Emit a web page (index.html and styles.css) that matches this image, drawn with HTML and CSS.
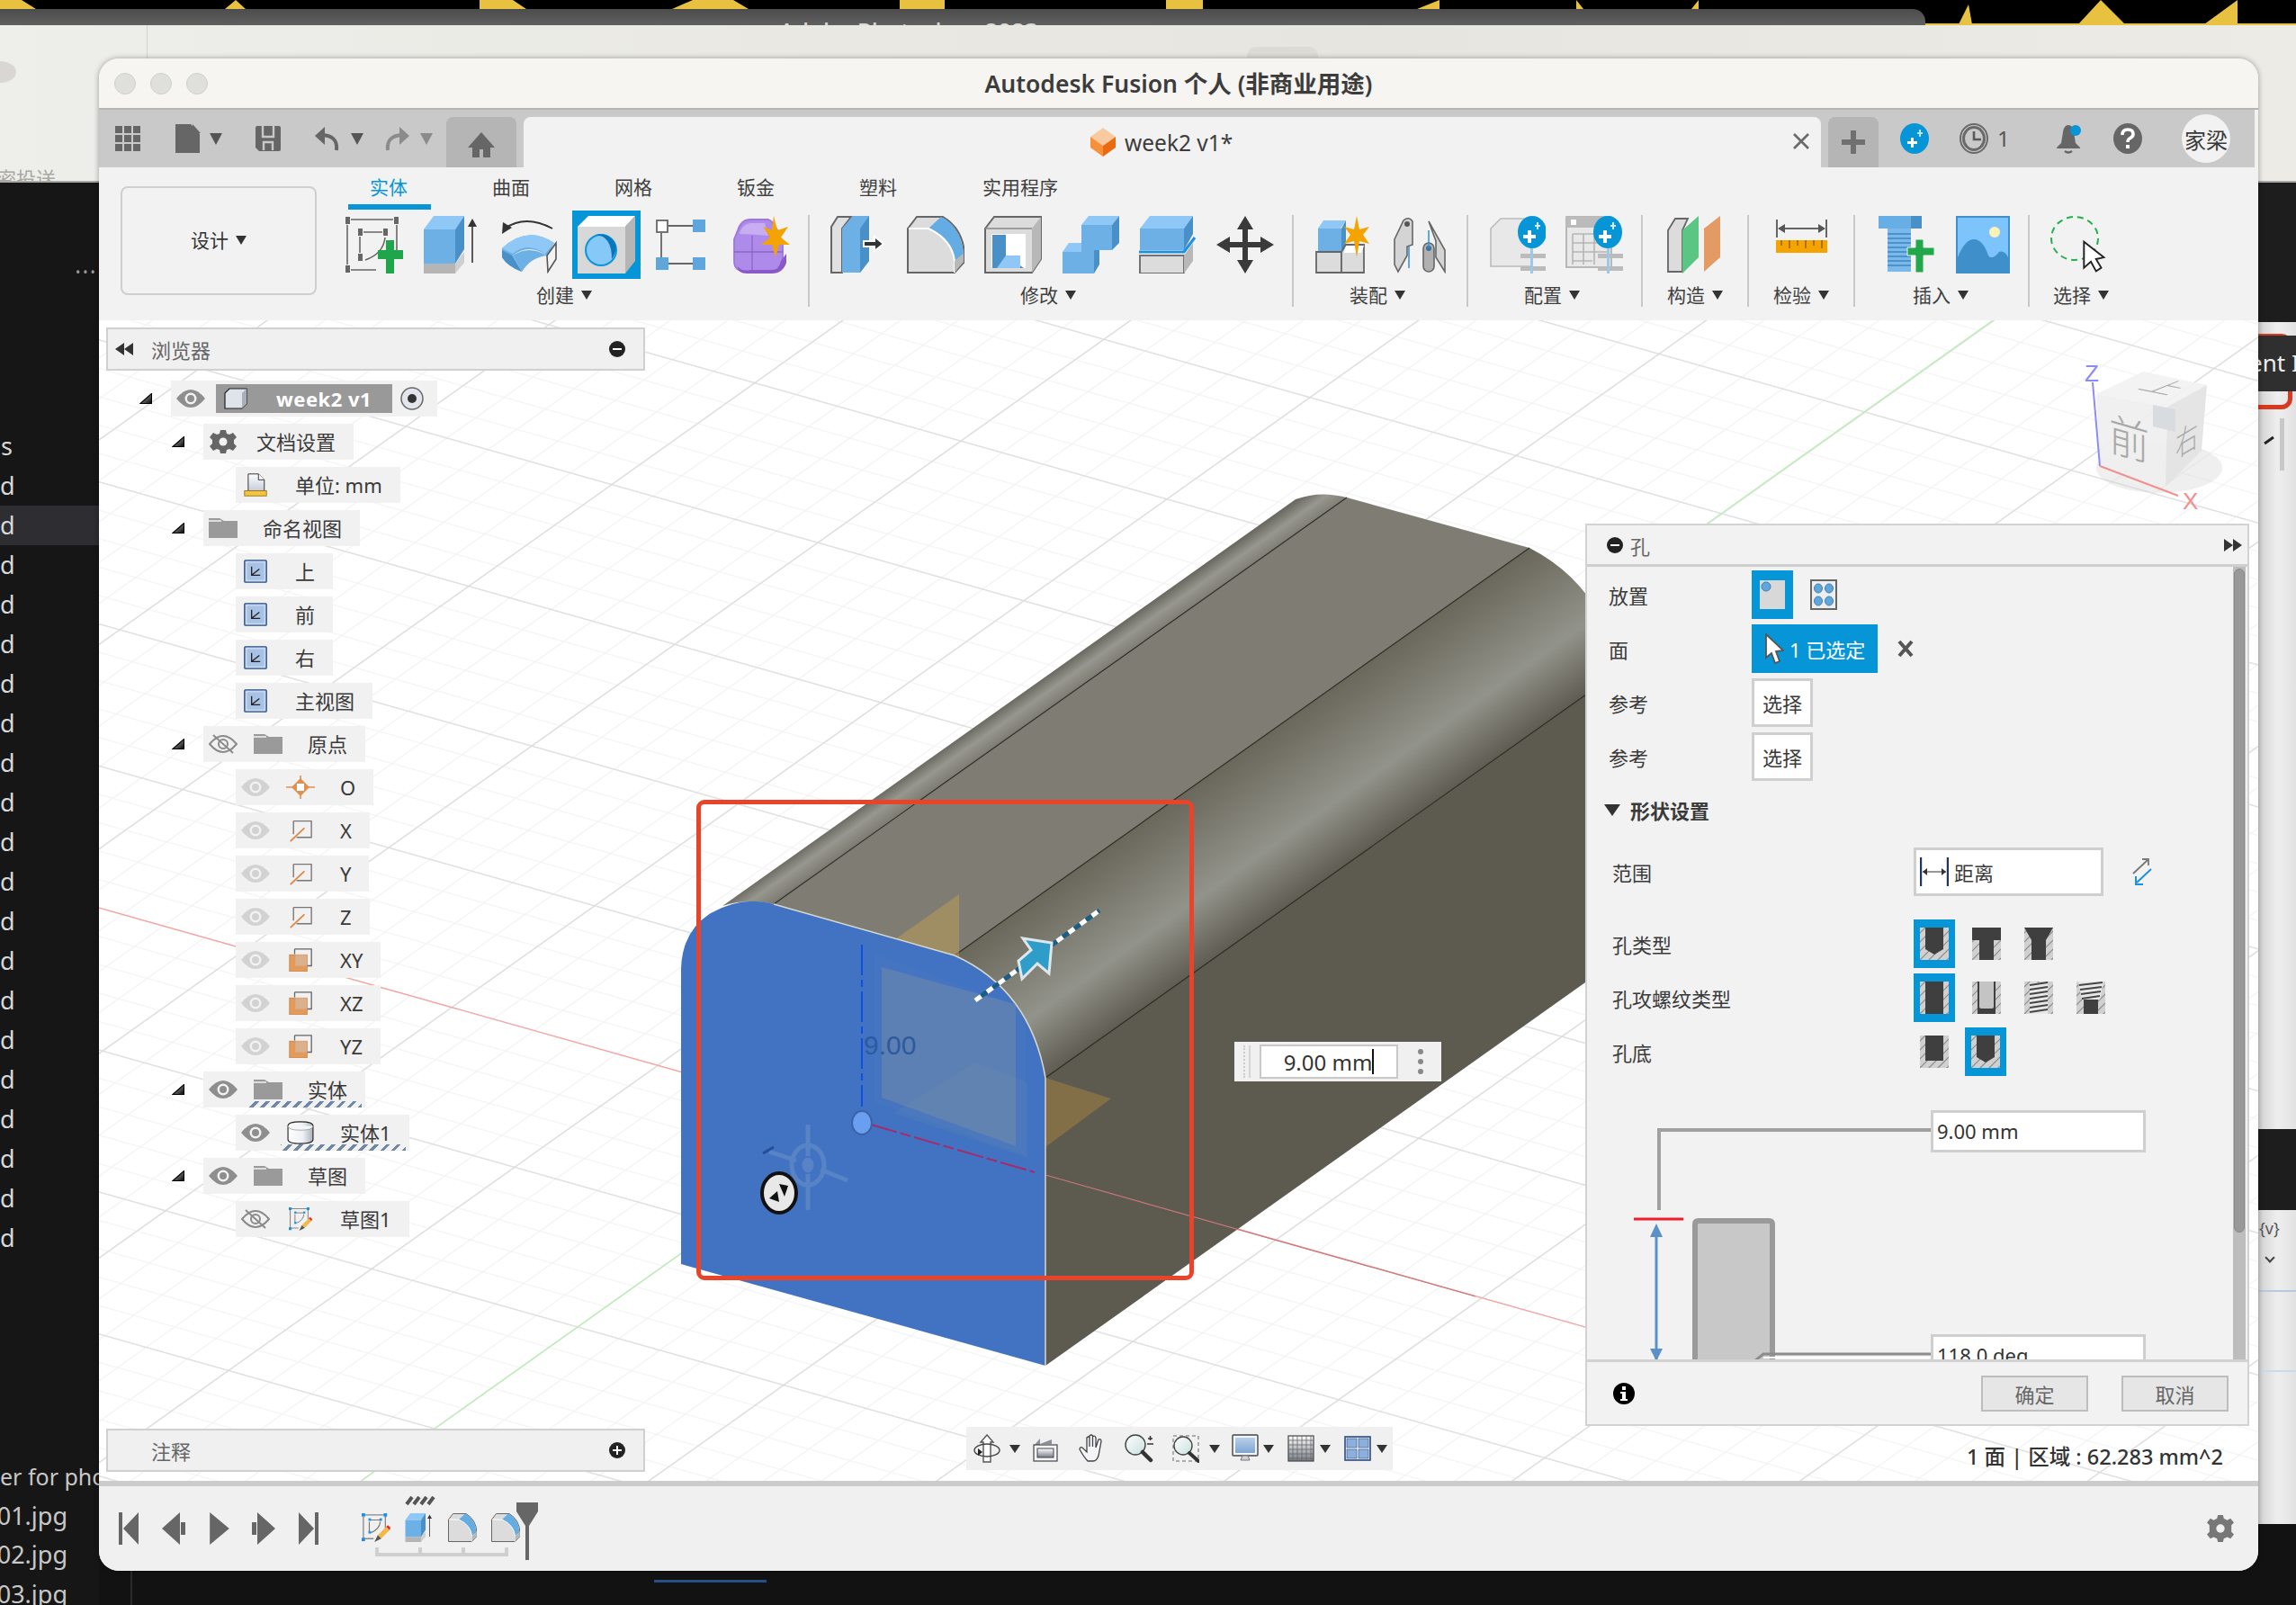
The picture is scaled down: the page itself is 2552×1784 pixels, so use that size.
FILE: index.html
```html
<!DOCTYPE html>
<html lang="zh">
<head>
<meta charset="utf-8">
<title>Autodesk Fusion</title>
<link rel="stylesheet" href="styles.css">
</head>
<body>
<svg class="defs" width="0" height="0">
  <defs>
    <linearGradient id="tw" x1="1" y1="1" x2="0" y2="0"><stop offset="0" stop-color="#000"/><stop offset="1" stop-color="#ccc"/></linearGradient>
    <linearGradient id="paper" x1="0" y1="0" x2="0" y2="1"><stop offset="0" stop-color="#fff"/><stop offset="1" stop-color="#c4cbd8"/></linearGradient>
    <linearGradient id="glass" x1="0" y1="0" x2="1" y2="1"><stop offset="0" stop-color="#fff"/><stop offset="1" stop-color="#c7e0dc"/></linearGradient>
    <linearGradient id="screen" x1="0" y1="0" x2="0" y2="1"><stop offset="0" stop-color="#b9d0ea"/><stop offset="1" stop-color="#7fa5d6"/></linearGradient>
    <linearGradient id="cloth" x1="0" y1="0" x2="0" y2="1"><stop offset="0" stop-color="#fff"/><stop offset="1" stop-color="#777c88"/></linearGradient>
    <linearGradient id="cyl" x1="0" y1="0" x2="1" y2="0"><stop offset="0" stop-color="#fff"/><stop offset=".6" stop-color="#eef0f4"/><stop offset="1" stop-color="#aab0bd"/></linearGradient>
    <linearGradient id="fl" gradientUnits="userSpaceOnUse" x1="1100" y1="796" x2="1119" y2="823"><stop offset="0" stop-color="#6b6a62"/><stop offset=".45" stop-color="#97978f"/><stop offset="1" stop-color="#7b796f"/></linearGradient>
    <linearGradient id="fr" gradientUnits="userSpaceOnUse" x1="1400" y1="822" x2="1498" y2="960"><stop offset="0" stop-color="#6a675b"/><stop offset=".62" stop-color="#92938a"/><stop offset="1" stop-color="#5f5c52"/></linearGradient>
    <pattern id="gmin" patternUnits="userSpaceOnUse" width="20" height="20" patternTransform="matrix(2.29 .646 1.59 -1.13 960 1249)"><path d="M0 0H20M0 20H20M0 0V20M20 0V20" stroke="#f3f3f3" stroke-width=".7" fill="none"/></pattern>
    <pattern id="gmaj" patternUnits="userSpaceOnUse" width="100" height="100" patternTransform="matrix(2.29 .646 1.59 -1.13 960 1249)"><path d="M0 0H100M0 100H100M0 0V100M100 0V100" stroke="#dcdcdc" stroke-width=".7" fill="none"/></pattern>
    <symbol id="eye" viewBox="0 0 32 22"><path d="M0 11Q16 -9 32 11Q16 31 0 11Z" fill="currentColor"/><circle cx="16" cy="11" r="6.5" fill="#f2f2f2"/><circle cx="16" cy="11" r="4" fill="currentColor"/></symbol>
    <symbol id="eyeoff" viewBox="0 0 32 22"><path d="M1 11Q16 -7 31 11Q16 29 1 11Z" fill="none" stroke="#8a8a8a" stroke-width="2"/><circle cx="16" cy="11" r="5" fill="none" stroke="#8a8a8a" stroke-width="2"/><path d="M5 1L27 21" stroke="#8a8a8a" stroke-width="2"/></symbol>
    <symbol id="folder" viewBox="0 0 32 22"><path d="M0 0H12L17 3H32V22H0Z" fill="#9a9a9a"/><path d="M0 3H14" stroke="#f2f2f2" stroke-width="1.5"/></symbol>
    <symbol id="tw-s" viewBox="0 0 14 12"><path d="M1 11.5L13.5 .5V11.5Z" fill="url(#tw)" stroke="#000" stroke-width="1.2"/></symbol>
    <symbol id="view" viewBox="0 0 30 30"><rect x="1" y="1" width="28" height="28" fill="#c7d9f0" stroke="#2b4a7f" stroke-width="1.6" rx="1"/><rect x="4" y="4" width="22" height="22" fill="#a7c2e4"/><path d="M10 9V20H21M10 20L20 12" stroke="#222" stroke-width="1.5" fill="none"/></symbol>
    <symbol id="axis" viewBox="0 0 30 30"><path d="M6 3H29V24H10" fill="none" stroke="#777" stroke-width="1.6"/><path d="M6 3V20" stroke="#777" stroke-width="1.6"/><path d="M2 29L20 12" stroke="#e5823d" stroke-width="2"/></symbol>
    <symbol id="plane" viewBox="0 0 32 32"><path d="M8 1H31V24H24M8 1V8" fill="none" stroke="#666" stroke-width="1.6"/><rect x="1" y="9" width="24" height="23" fill="#e39a5d" stroke="#c97e42"/><rect x="9" y="9" width="16" height="15" fill="#dbb08d"/></symbol>
    <symbol id="fillet" viewBox="0 0 64 64"><path d="M1 14L11 1H40Q62 14 64 42V51L53 63H1Z" fill="#dcdcdc" stroke="#666" stroke-width="2"/><path d="M24 14L38 1Q60 12 63 42L53 50Q50 26 24 14Z" fill="#64ace4"/><path d="M2 14H24Q50 26 53 50V63" fill="none" stroke="#fff" stroke-width="2"/><path d="M53 50L63 42V51L53 63Z" fill="#b8b8b8"/></symbol>
    <symbol id="extrude" viewBox="0 0 64 64"><path d="M1 15L12 0H46L36 15Z" fill="#8fc8f7"/><rect x="1" y="15" width="35" height="38" fill="#6cb0e6"/><path d="M36 15L46 0V37L36 53Z" fill="#4a90c8"/><rect x="1" y="53" width="35" height="11" fill="#b5b5b5"/><path d="M36 53L46 40V52L36 64Z" fill="#cfcfcf"/><path d="M55 52V8" stroke="#333" stroke-width="1.6"/><path d="M50 12L55 3L60 12Z" fill="#333"/></symbol>
    <symbol id="skedit" viewBox="0 0 34 34"><path d="M3 2H28V18M2 4V30H14" fill="none" stroke="#888" stroke-width="1.4"/><path d="M10 8H22M9 10V22M22 10Q21 19 11 23" fill="none" stroke="#777" stroke-width="1.2"/><g fill="#1e90e8"><rect x="0" y="0" width="4" height="4"/><rect x="26" y="0" width="4" height="4"/><rect x="0" y="29" width="4" height="4"/><rect x="8" y="6" width="3" height="3"/><rect x="21" y="6" width="3" height="3"/><rect x="8" y="21" width="3" height="3"/></g><path d="M17 32L19 26L29 16L33 20L23 30Z" fill="#f0b94a"/><path d="M29 16L31 14L34 17L33 20Z" fill="#e22"/><path d="M15 34L19 26L23 30Z" fill="#555"/></symbol>
    <symbol id="hatchU" viewBox="0 0 32 36"><rect width="32" height="36" fill="#d0d0d0"/><path d="M-4 10L8 -2M-4 20L18 -2M-4 30L28 -2M-2 38L36 0M8 38L36 10M18 38L36 20M28 38L36 30" stroke="#8a8a8a" stroke-width="1.2"/></symbol>
  </defs>
</svg>

<div class="desk">
  <div class="d-top">
    <svg class="d-stars" viewBox="0 0 2552 28" preserveAspectRatio="none"><path fill="#e9c140" d="M0 0H24L40 10H0ZM250 10L262 0L273 10ZM533 0H570L585 10H533ZM747 10L770 0H815L832 10ZM1000 0H1050V10H1000ZM1296 0H1337V10H1296ZM1575 10L1600 0V10ZM1752 0L1760 10H1752ZM1880 10L1888 0V10ZM2177 27L2188 5L2192 27ZM2310 27L2335 0L2362 27ZM2450 27L2487 0V27ZM2140 26H2552V28H2140Z"/></svg>
    <div class="d-photoshop"><span>Adobe Photoshop 2023</span></div>
  </div>
  <div class="d-win">
    <i class="d-vline"></i><i class="d-light"></i><i class="d-tabshape"></i>
    <span class="d-clip">密投送</span>
  </div>
  <div class="d-left">
    <i class="d-more">•••</i>
    <div class="d-list">
      <div class="d-it">s</div><div class="d-it">d</div><div class="d-it sel">d</div><div class="d-it">d</div><div class="d-it">d</div><div class="d-it">d</div><div class="d-it">d</div><div class="d-it">d</div><div class="d-it">d</div><div class="d-it">d</div><div class="d-it">d</div><div class="d-it">d</div><div class="d-it">d</div><div class="d-it">d</div><div class="d-it">d</div><div class="d-it">d</div><div class="d-it">d</div><div class="d-it">d</div><div class="d-it">d</div><div class="d-it">d</div><div class="d-it">d</div>
    </div>
    <div class="d-files">
      <div class="d-f first"><span>er for phone</span></div><div class="d-f"><span>_01.jpg</span></div><div class="d-f"><span>_02.jpg</span></div><div class="d-f"><span>_03.jpg</span></div>
    </div>
  </div>
  <i class="d-bline"></i><i class="d-blue"></i>
  <div class="d-right">
    <i class="dr-dark"></i>
    <i class="dr-red"></i>
    <div class="dr-tip"><span>ent I</span></div>
    <i class="dr-mark"></i><i class="dr-bar"></i>
    <i class="dr-dark2"></i>
    <span class="dr-v">{v}</span>
    <i class="dr-l1"></i><i class="dr-l2"></i>
    <i class="dr-chev"></i>
  </div>
</div>

<main class="win">
  <header class="titlebar">
    <div class="lights"><i></i><i></i><i></i></div>
    <h1>Autodesk Fusion 个人 (非商业用途)</h1>
  </header>

  <nav class="tabbar">
    <svg class="qa w28 first" viewBox="0 0 28 28"><path fill="#666" d="M0 0h8v8H0zM10 0h8v8h-8zM20 0h8v8h-8zM0 10h8v8H0zM10 10h8v8h-8zM20 10h8v8h-8zM0 20h8v8H0zM10 20h8v8h-8zM20 20h8v8h-8z"/></svg>
    <svg class="qa w28 m39" viewBox="0 0 28 32"><path fill="#666" d="M0 0H17L27 11V32H0ZM19 0L28 10H19Z"/></svg><i class="caret m10"></i>
    <svg class="qa w28 m37" viewBox="0 0 28 28"><path fill="#666" d="M2 0H26Q28 0 28 2V26Q28 28 26 28H4L0 24V2Q0 0 2 0Z"/><path d="M8 0V12H20V0M9 27V18H19V27" fill="none" stroke="#c9c9c9" stroke-width="2.4"/></svg>
    <svg class="qa w28 m38" viewBox="0 0 28 26"><path d="M24 26Q26 10 8 9" fill="none" stroke="#666" stroke-width="4"/><path d="M11 0L0 10L11 20Z" fill="#666"/></svg><i class="caret m12"></i>
    <svg class="qa w28 m23" viewBox="0 0 28 26"><path d="M4 26Q2 10 20 9" fill="none" stroke="#8b8b8b" stroke-width="4"/><path d="M17 0L28 10L17 20Z" fill="#8b8b8b"/></svg><i class="caret m12 dimc"></i>
    <div class="home"><svg width="32" height="28" viewBox="0 0 30 28"><path fill="#666" d="M15 0L30 17H25V28H17V19H13V28H5V17H0Z"/></svg></div>
    <div class="doc">
      <svg width="28" height="32" viewBox="0 0 28 32"><path d="M14 0L28 10L14 20L0 10Z" fill="#f9c9a0"/><path d="M0 10L14 20V32L0 22Z" fill="#f7903a"/><path d="M28 10L14 20V32L28 22Z" fill="#ea6a12"/></svg>
      <span>week2 v1*</span>
      <svg class="doc-x" width="18" height="18" viewBox="0 0 18 18"><path d="M1 1L17 17M17 1L1 17" stroke="#6a6a6a" stroke-width="2.6"/></svg>
    </div>
    <div class="plus"><svg width="26" height="26" viewBox="0 0 26 26"><path d="M10 0h6v10h10v6H16v10h-6V16H0v-6h10z" fill="#707070"/></svg></div>
    <div class="tr">
      <svg class="t-data" width="32" height="34" viewBox="0 0 32 34"><ellipse cx="16" cy="17" rx="16" ry="17" fill="#0696d7"/><path d="M12 16v4H8v3h4v4h3v-4h4v-3h-4v-4z" fill="#fff"/><path d="M19 10h2V7h2v3h2v2h-2v3h-2v-3h-2z" fill="#bfe6f8"/></svg>
      <svg class="t-clock" width="32" height="34" viewBox="0 0 32 34"><ellipse cx="16" cy="17" rx="15" ry="16" fill="none" stroke="#6a6a6a" stroke-width="2"/><ellipse cx="16" cy="17" rx="11.5" ry="12.5" fill="none" stroke="#6a6a6a" stroke-width="3"/><path d="M16 9V18H24" fill="none" stroke="#5a5a5a" stroke-width="2.6"/></svg>
      <span class="t-one">1</span>
      <svg class="t-bell" width="28" height="34" viewBox="0 0 28 34"><path d="M14 2Q19 2 20 10L22 22L27 27V28H1V27L6 22L8 10Q9 2 14 2Z" fill="#666"/><path d="M10 31Q14 34 18 31" stroke="#666" stroke-width="2.4" fill="none"/><circle cx="22" cy="8" r="6" fill="#0696d7"/></svg>
      <svg class="t-help" width="32" height="34" viewBox="0 0 32 34"><ellipse cx="16" cy="17" rx="16" ry="17" fill="#666"/><path d="M10 13Q10 7 16 7Q22 7 22 12Q22 15 18 17Q16 18 16 21" fill="none" stroke="#fff" stroke-width="3.6"/><rect x="14" y="24" width="4" height="4" fill="#fff"/></svg>
      <div class="avatar">家梁</div>
    </div>
  </nav>

  <section class="toolbar">
    <button class="design">设计<i class="caret sm"></i></button>
    <div class="ribbon">
      <div class="rtabs">
        <span class="rtab on">实体</span><span class="rtab">曲面</span><span class="rtab">网格</span><span class="rtab">钣金</span><span class="rtab">塑料</span><span class="rtab wide">实用程序</span>
      </div>
      <div class="groups">
        <div class="grp">
          <div class="cells">
            <span class="cell"><svg viewBox="0 0 64 64"><g fill="#666"><rect y="1" width="5" height="8"/><rect x="54" y="1" width="5" height="8"/><rect y="55" width="5" height="8"/><rect x="14" y="14" width="5" height="8"/><rect x="42" y="14" width="5" height="8"/><rect x="14" y="42" width="5" height="8"/></g><path d="M6 4H53M2 10V54M6 60H34M57 10V40M20 18H41M16 23V41M44 24Q42 42 22 49" fill="none" stroke="#666" stroke-width="1.6"/><path d="M36 38h9v-11h9v11h10v10h-10v16h-9v-16h-9z" fill="#1fa54a"/></svg></span>
            <span class="cell"><svg><use href="#extrude"/></svg></span>
            <span class="cell"><svg viewBox="0 0 64 64"><path d="M2 36Q30 10 60 30L52 44Q32 30 14 44L24 62Q8 56 2 46Z" fill="#6cb0e6"/><path d="M2 36Q30 10 60 30L50 42Q30 28 14 42Z" fill="#8fc8f7"/><path d="M2 38L13 44L24 62Q8 56 2 46Z" fill="#4a90c8"/><path d="M14 44Q32 32 52 44Q34 46 24 62Z" fill="#6cb0e6"/><path d="M52 44L62 30V48L53 62Z" fill="#f2f2f2" stroke="#555" stroke-width="1.6"/><path d="M5 14Q28 -2 58 14" fill="none" stroke="#333" stroke-width="1.8"/><path d="M2 20L3 7L13 13Z" fill="#333"/></svg></span>
            <span class="cell active"><svg viewBox="0 0 64 64"><path d="M0 12L12 0H64L53 12Z" fill="#fff"/><rect y="12" width="53" height="52" fill="#d8d8d8"/><path d="M53 12L64 0V50L53 64Z" fill="#b5b5b5"/><circle cx="26" cy="38" r="18" fill="#0a96d9"/><circle cx="26" cy="38" r="16" fill="#86c8f8"/><path d="M20 21Q38 22 38 48Q46 36 40 28Q32 18 20 21Z" fill="#0a76ba"/></svg></span>
            <span class="cell"><svg viewBox="0 0 64 64"><rect x="2" y="5" width="12" height="13" fill="#fff" stroke="#666" stroke-width="1.8"/><rect x="42" y="4" width="14" height="14" fill="#5fa6dd"/><rect x="1" y="46" width="14" height="14" fill="#5fa6dd"/><rect x="42" y="46" width="14" height="14" fill="#5fa6dd"/><path d="M15 11H42M7 19V46M15 53H42" stroke="#666" stroke-width="1.8"/></svg></span>
            <span class="cell"><svg viewBox="0 0 64 64"><path d="M6 16Q10 4 20 4H40Q48 6 56 32V50Q56 62 44 62H16Q2 62 2 50V26Z" fill="#ae8aeb" stroke="#9d78da" stroke-width="1.8"/><path d="M8 20Q10 10 20 8L36 8L40 22Q20 20 8 20Z" fill="#c8adf2"/><path d="M2 40H56M22 22V62" stroke="#8b66c9" stroke-width="1.3"/><path d="M6 56Q10 62 20 60H44Q52 60 54 50L60 42V52Q56 64 44 64H16Q6 64 6 56Z" fill="#8a58c8"/><path d="M46 0L50 16L62 12L54 24L64 32L52 32L48 46L44 32L32 32L42 24L34 12L44 16Z" fill="#f5a300"/></svg></span>
          </div>
          <div class="glabel">创建<i class="caret sm"></i></div>
        </div>
        <div class="grp">
          <div class="cells">
            <span class="cell"><svg viewBox="0 0 64 64"><path d="M2 12L9 1H24L14 14V63H2Z" fill="#e0e0e0" stroke="#666" stroke-width="2"/><path d="M14 14L26 0H44V50L34 63H14Z" fill="#6cb0e6"/><path d="M34 14L44 0V50L34 63Z" fill="#4a90c8"/><path d="M38 28H50V23L60 31L50 39V34H38Z" fill="#333" stroke="#fff" stroke-width="2"/></svg></span>
            <span class="cell"><svg><use href="#fillet"/></svg></span>
            <span class="cell"><svg viewBox="0 0 64 64"><path d="M1 14L11 1H63V48L53 63H1Z" fill="#dcdcdc" stroke="#666" stroke-width="2"/><path d="M53 14L63 1V48L53 63Z" fill="#b8b8b8"/><path d="M1 14H53" stroke="#888" stroke-width="1.3"/><rect x="8" y="20" width="38" height="38" fill="#fff"/><path d="M9 21H24V44L44 58H9Z" fill="#4a90c8"/><path d="M24 44H40V58H14Z" fill="#8fc8f7"/></svg></span>
            <span class="cell"><svg viewBox="0 0 64 64"><path d="M22 10L30 0H64L56 10ZM1 40L8 30H24V40Z" fill="#8fc8f7"/><path d="M22 10H56V38H36V64H1V40H22Z" fill="#6cb0e6"/><path d="M56 10L64 0V30L56 38ZM36 38L42 38V54L36 64Z" fill="#4a90c8"/></svg></span>
            <span class="cell"><svg viewBox="0 0 64 64"><path d="M1 14L12 0H60L50 14Z" fill="#8fc8f7"/><rect x="1" y="14" width="49" height="24" fill="#6cb0e6"/><path d="M50 14L60 0V20L50 38Z" fill="#4a90c8"/><path d="M0 40H50L62 24" fill="none" stroke="#1e90e0" stroke-width="3"/><rect x="1" y="44" width="49" height="20" fill="#dcdcdc" stroke="#666" stroke-width="1.8"/><path d="M50 44L60 30V50L50 64Z" fill="#b8b8b8"/></svg></span>
            <span class="cell"><svg viewBox="0 0 64 64"><path d="M32 0L41 15H35V29H49V23L64 32L49 41V35H35V49H41L32 64L23 49H29V35H15V41L0 32L15 23V29H29V15H23Z" fill="#3a3a3a"/></svg></span>
          </div>
          <div class="glabel">修改<i class="caret sm"></i></div>
        </div>
        <div class="grp">
          <div class="cells">
            <span class="cell"><svg viewBox="0 0 64 64"><path d="M5 14L11 5H36L30 14Z" fill="#8fc8f7"/><rect x="5" y="14" width="26" height="26" fill="#6cb0e6"/><path d="M31 14L36 5V32L31 40Z" fill="#4a90c8"/><path d="M3 40H31V63H3Z" fill="#dcdcdc" stroke="#666" stroke-width="1.8"/><path d="M31 40L36 32H56V63H31Z" fill="#dcdcdc" stroke="#666" stroke-width="1.8"/><path d="M36 33H56L53 41H34Z" fill="#fff"/><path d="M48 0L51 15L62 12L55 21L62 31L51 28L48 46L45 28L34 31L41 21L34 12L45 15Z" fill="#f5a300"/></svg></span>
            <span class="cell"><svg viewBox="0 0 64 64"><path d="M4 26L14 5Q20 0 24 6V32L18 34V44L8 62L4 54Z" fill="#d4d4d4" stroke="#666" stroke-width="1.6"/><path d="M42 6L60 38V62L50 46V28Z" fill="#d4d4d4" stroke="#666" stroke-width="1.6"/><rect x="36" y="30" width="12" height="32" rx="6" fill="#b0b0b0" stroke="#666" stroke-width="1.6"/><circle cx="42" cy="36" r="3" fill="#3a6ea5"/><circle cx="18" cy="9" r="3" fill="#555"/><path d="M42 16V36M20 34V58" stroke="#2f8fd8" stroke-width="1.5"/></svg></span>
          </div>
          <div class="glabel">装配<i class="caret sm"></i></div>
        </div>
        <div class="grp">
          <div class="cells">
            <span class="cell"><svg viewBox="0 0 64 64"><path d="M3 14L14 3H48V56H3Z" fill="#e8e8e8" stroke="#bbb" stroke-width="1.6"/><ellipse cx="49" cy="18" rx="16" ry="18" fill="#0696d7"/><path d="M44 16v5h-5v4h5v5h4v-5h5v-4h-5v-5z" fill="#fff"/><path d="M52 10h2V7h2v3h2v2h-2v3h-2v-3h-2z" fill="#d0eefc"/><rect x="36" y="42" width="28" height="5" fill="#bbb"/><rect x="36" y="56" width="28" height="5" fill="#bbb"/><rect x="47" y="36" width="3" height="28" fill="#9cc9ea"/></svg></span>
            <span class="cell"><svg viewBox="0 0 64 64"><rect x="1" y="1" width="50" height="56" fill="#e8e8e8" stroke="#aaa" stroke-width="1.6"/><rect x="1" y="1" width="50" height="12" fill="#bbb"/><rect x="6" y="4" width="6" height="6" fill="#fff"/><path d="M8 20H46M8 30H46M8 40H46M8 50H30M8 20V54M20 20V54M32 20V54" stroke="#b5b5b5" stroke-width="1.6"/><ellipse cx="47" cy="18" rx="16" ry="18" fill="#0696d7"/><path d="M42 16v5h-5v4h5v5h4v-5h5v-4h-5v-5z" fill="#fff"/><path d="M50 10h2V7h2v3h2v2h-2v3h-2v-3h-2z" fill="#d0eefc"/><rect x="36" y="42" width="28" height="5" fill="#bbb"/><rect x="36" y="56" width="28" height="5" fill="#bbb"/><rect x="46" y="36" width="3" height="28" fill="#9cc9ea"/></svg></span>
          </div>
          <div class="glabel">配置<i class="caret sm"></i></div>
        </div>
        <div class="grp p15">
          <div class="cells">
            <span class="cell"><svg viewBox="0 0 64 64"><path d="M2 16L10 3H24L18 16V62H2Z" fill="#dcdcdc" stroke="#666" stroke-width="1.8"/><path d="M18 16L36 0V46L18 64Z" fill="#5bc583"/><path d="M42 40V14L60 0V46L42 62Z" fill="#e49a63"/></svg></span>
          </div>
          <div class="glabel">构造<i class="caret sm"></i></div>
        </div>
        <div class="grp p15">
          <div class="cells">
            <span class="cell"><svg viewBox="0 0 64 64"><path d="M5 4V24M60 4V24M8 14H57" stroke="#666" stroke-width="2"/><path d="M6 14L14 9V19ZM59 14L51 9V19Z" fill="#555"/><rect x="4" y="27" width="57" height="14" fill="#f5a300"/><path d="M10 27V33M19 27V36M28 27V33M37 27V36M46 27V33M55 27V36" stroke="#8a5a00" stroke-width="1.3"/></svg></span>
          </div>
          <div class="glabel">检验<i class="caret sm"></i></div>
        </div>
        <div class="grp pins">
          <div class="cells">
            <span class="cell"><svg viewBox="0 0 64 64"><path d="M2 0H50V14H2Z" fill="#66aee4"/><rect x="38" y="0" width="12" height="14" fill="#4a90c8"/><rect x="12" y="14" width="26" height="48" fill="#7ab9ea"/><path d="M12 20H38M12 25H38M12 30H38M12 35H38M12 40H38M12 45H38M12 50H38M12 55H38" stroke="#3f87c1" stroke-width="1.5"/><path d="M34 35h9v-9h9v9h12v9h-12v19h-9v-19h-9z" fill="#22a84a" stroke="#f2f2f2" stroke-width="1"/></svg></span>
            <span class="cell"><svg viewBox="0 0 60 64"><rect width="60" height="64" fill="#3f8fcb"/><rect x="2" y="2" width="56" height="60" fill="#7cc4fb"/><circle cx="43" cy="18" r="6" fill="#fbf2b8"/><path d="M2 46Q10 26 20 26Q30 26 36 44Q40 50 48 40Q54 38 58 46V62H2Z" fill="#3f8fcb"/></svg></span>
          </div>
          <div class="glabel">插入<i class="caret sm"></i></div>
        </div>
        <div class="grp last">
          <div class="cells">
            <span class="cell"><svg viewBox="0 0 64 64"><ellipse cx="28" cy="25" rx="26" ry="24" fill="none" stroke="#22b14c" stroke-width="2" stroke-dasharray="7 5"/><path d="M42 30L42 60L50 53L56 64L62 60L56 50L65 48Z" transform="translate(-2 0) scale(.96)" fill="#fff" stroke="#222" stroke-width="2"/></svg></span>
          </div>
          <div class="glabel">选择<i class="caret sm"></i></div>
        </div>
      </div>
    </div>
  </section>

  <section class="viewport">
    <svg class="scene" viewBox="110 356 2400 1290" width="2400" height="1290">
      <rect x="110" y="356" width="2400" height="1290" fill="#fff"/>
      <rect x="110" y="356" width="2400" height="1290" fill="url(#gmin)"/>
      <rect x="110" y="356" width="2400" height="1290" fill="url(#gmaj)"/>
      <path d="M110 1009L1780 1480" stroke="#ff9c9c" stroke-width="1.2"/>
      <path d="M403 1645L2215 356" stroke="#b5f2ae" stroke-width="1.2"/>
      <!-- body -->
      <path d="M1162 1198V1518L1762 1092V773L1700 609Z" fill="#5d5a50"/>
      <path d="M860 1005L1497 553L1700 609L1061 1062Z" fill="#7f7d73"/>
      <path d="M803 1007Q830 998 860 1005L1497 553Q1467 545 1440 555Z" fill="url(#fl)"/>
      <path d="M1061 1062Q1145 1100 1162 1198L1801 745Q1780 650 1700 609Z" fill="url(#fr)"/>
      <path d="M860 1005L1497 553M1061 1062L1700 609M1162 1198L1801 745" stroke="#2f2d28" stroke-width="1.2" fill="none"/>
      <path d="M1162 1306L1640 1441" stroke="#c87878" stroke-width="1.2"/>
      <!-- planes above the face -->
      <path d="M995 1044L1066 994V1064Z" fill="#b99a55" opacity=".55"/>
      <path d="M1162 1198L1235 1221L1162 1275Z" fill="#b08a3f" opacity=".45"/>
      <!-- blue face -->
      <path d="M757 1405V1077Q758 1035 790 1015Q825 995 860 1005L1061 1062Q1145 1100 1162 1198V1518Z" fill="#4173c2"/>
      <path d="M860 1005L1061 1062Q1145 1100 1162 1198V1518" fill="none" stroke="#d8d8d0" stroke-width="1.5"/>
      <path d="M972 1060L1140 1122V1285L972 1225Z" fill="#8a94a4" opacity=".06"/>
      <path d="M980 1075L1129 1116V1274L980 1220Z" fill="#a8a288" opacity=".24"/>
      <path d="M993 1237L1084 1181L1142 1203V1287Z" fill="#a8a898" opacity=".08"/>
      <path d="M958 1050V1230" stroke="#1050e0" stroke-width="2" stroke-dasharray="34 5 8 5"/>
      <path d="M968 1250L1150 1303" stroke="#a82a68" stroke-width="2" stroke-dasharray="30 4 12 4"/>
      <path d="M1084 1112L1222 1012" stroke="#fff" stroke-width="5" stroke-dasharray="9 7"/>
      <path d="M1084 1112L1222 1012" stroke="#1a5d85" stroke-width="5" stroke-dasharray="8 8" stroke-dashoffset="8"/>
      <path d="M1137 1043L1169 1048L1166 1082L1153 1071L1136 1088L1132 1068L1146 1056Z" fill="#2f9dc9" stroke="#dfe7ec" stroke-width="3"/>
      <ellipse cx="958" cy="1248" rx="11" ry="13" fill="#6a9ff0" stroke="#3b62a8" stroke-width="2"/>
      <g stroke="#6b92c8" fill="none" opacity=".55">
        <ellipse cx="898" cy="1295" rx="18" ry="22" stroke-width="5"/><ellipse cx="898" cy="1295" rx="6" ry="8" fill="#6b92c8"/>
        <path d="M898 1250V1285M898 1305V1345M855 1280L885 1290M912 1300L942 1312" stroke-width="5"/>
      </g>
      <path d="M860 1275L848 1282" stroke="#224d9a" stroke-width="3"/>
      <ellipse cx="866" cy="1326" rx="19" ry="22" fill="#e8e8e8" stroke="#111" stroke-width="4"/>
      <path d="M855 1332L864 1324L866 1336ZM866 1316L876 1318L872 1330Z" fill="#111"/>
      <text class="dim-t" x="960" y="1172">9.00</text>
      <!-- view cube -->
      <ellipse cx="2400" cy="520" rx="70" ry="28" fill="#d0d0d0" opacity=".35"/>
      <path d="M2330 438L2382 413L2453 428L2409 452Z" fill="#f2f2f2" opacity=".9"/>
      <path d="M2330 438L2409 452L2407 541L2334 518Z" fill="#eeeeee" opacity=".9"/>
      <path d="M2409 452L2453 428L2447 501L2407 541Z" fill="#e2e2e2" opacity=".9"/>
      <path d="M2393 450L2418 455V480L2393 474Z" fill="#d8dce0"/>
      <text class="cube-t" transform="matrix(.9 .26 0 1 2344 500)">前</text>
      <text class="cube-t sm" transform="matrix(.7 -.42 0 1 2418 510)">右</text>
      <text class="cube-t sm" transform="matrix(1 .2 -1 .4 2375 432)">上</text>
      <path d="M2326 425L2334 518" stroke="#8c8cf2" stroke-width="2"/>
      <path d="M2334 518L2421 551" stroke="#f29090" stroke-width="2"/>
      <text class="ax z" x="2317" y="424">Z</text>
      <text class="ax x" x="2426" y="566">X</text>
    </svg>

    <div class="redbox"></div>

    <div class="dimbox"><i class="grip"></i><div class="dim-in">9.00 mm<i class="textcaret"></i></div><i class="dots"></i></div>

    <div class="panel browser"><svg class="pc" width="20" height="14" viewBox="0 0 20 14"><path d="M10 0L0 7L10 14ZM20 0L10 7L20 14Z" fill="#333"/></svg><span>浏览器</span><i class="round minus"></i></div>

    <div class="tree">
      <div class="node l0"><svg class="twisty"><use href="#tw-s"/></svg><div class="pill root"><svg class="ico eye"><use href="#eye"/></svg><div class="rootname"><svg width="26" height="24" viewBox="0 0 26 24"><path d="M1 6L6 1H25V18L20 23H1Z" fill="#dfe3ea" stroke="#222" stroke-width="1.2"/><path d="M20 6L25 1V18L20 23Z" fill="#a8afbb"/></svg><b>week2 v1</b></div><svg class="radio" width="26" height="26" viewBox="0 0 26 26"><circle cx="13" cy="13" r="12" fill="#e2e5ec" stroke="#666" stroke-width="1.5"/><circle cx="13" cy="13" r="5" fill="#333"/></svg></div></div>
      <div class="node l1"><svg class="twisty"><use href="#tw-s"/></svg><div class="pill"><svg class="ico" viewBox="0 0 32 26"><path fill="#666" d="M13 0h6l1 4 3 1 4-2 4 5-3 3v4l3 3-4 5-4-2-3 1-1 4h-6l-1-4-3-1-4 2-4-5 3-3v-4L1 8l4-5 4 2 3-1z"/><circle cx="16" cy="13" r="4.5" fill="#f2f2f2"/></svg><span class="lb gear">文档设置</span></div></div>
      <div class="node l2"><div class="pill"><svg class="ico" viewBox="0 0 32 32"><path d="M6 1H20L28 9V25H6Z" fill="url(#paper)" stroke="#333" stroke-width="1.2"/><path d="M20 1V9H28" fill="#fff" stroke="#333" stroke-width="1.2"/><rect x="1" y="24" width="30" height="7" fill="#f4c33f" stroke="#8a6a10"/></svg><span class="lb">单位: mm</span></div></div>
      <div class="node l1"><svg class="twisty"><use href="#tw-s"/></svg><div class="pill"><svg class="ico"><use href="#folder"/></svg><span class="lb">命名视图</span></div></div>
      <div class="node l2"><div class="pill"><svg class="ico"><use href="#view"/></svg><span class="lb">上</span></div></div>
      <div class="node l2"><div class="pill"><svg class="ico"><use href="#view"/></svg><span class="lb">前</span></div></div>
      <div class="node l2"><div class="pill"><svg class="ico"><use href="#view"/></svg><span class="lb">右</span></div></div>
      <div class="node l2"><div class="pill"><svg class="ico"><use href="#view"/></svg><span class="lb">主视图</span></div></div>
      <div class="node l1"><svg class="twisty"><use href="#tw-s"/></svg><div class="pill"><svg class="ico"><use href="#eyeoff"/></svg><svg class="ico g"><use href="#folder"/></svg><span class="lb">原点</span></div></div>
      <div class="node l2"><div class="pill"><svg class="ico eye off"><use href="#eye"/></svg><svg class="ico g" viewBox="0 0 32 26"><path d="M16 0V26M0 13H32" stroke="#e0914f" stroke-width="1.6"/><path d="M16 3L26 13L16 23L6 13Z" fill="#e0914f"/><rect x="12" y="9" width="8" height="8" fill="#fff"/></svg><span class="lb">O</span></div></div>
      <div class="node l2"><div class="pill"><svg class="ico eye off"><use href="#eye"/></svg><svg class="ico g"><use href="#axis"/></svg><span class="lb">X</span></div></div>
      <div class="node l2"><div class="pill"><svg class="ico eye off"><use href="#eye"/></svg><svg class="ico g"><use href="#axis"/></svg><span class="lb">Y</span></div></div>
      <div class="node l2"><div class="pill"><svg class="ico eye off"><use href="#eye"/></svg><svg class="ico g"><use href="#axis"/></svg><span class="lb">Z</span></div></div>
      <div class="node l2"><div class="pill"><svg class="ico eye off"><use href="#eye"/></svg><svg class="ico g"><use href="#plane"/></svg><span class="lb">XY</span></div></div>
      <div class="node l2"><div class="pill"><svg class="ico eye off"><use href="#eye"/></svg><svg class="ico g"><use href="#plane"/></svg><span class="lb">XZ</span></div></div>
      <div class="node l2"><div class="pill"><svg class="ico eye off"><use href="#eye"/></svg><svg class="ico g"><use href="#plane"/></svg><span class="lb">YZ</span></div></div>
      <div class="node l1"><svg class="twisty"><use href="#tw-s"/></svg><div class="pill warn"><svg class="ico eye"><use href="#eye"/></svg><svg class="ico g"><use href="#folder"/></svg><span class="lb">实体</span></div></div>
      <div class="node l2"><div class="pill warn"><svg class="ico eye"><use href="#eye"/></svg><svg class="ico g" viewBox="0 0 32 28"><path d="M1 6Q1 1 16 1Q31 1 31 6V22Q31 27 16 27Q1 27 1 22Z" fill="url(#cyl)" stroke="#222" stroke-width="1.2"/><path d="M1 6Q1 11 16 11Q31 11 31 6" fill="#f4f5f7" stroke="#777" stroke-width=".6"/></svg><span class="lb">实体1</span></div></div>
      <div class="node l1"><svg class="twisty"><use href="#tw-s"/></svg><div class="pill"><svg class="ico eye"><use href="#eye"/></svg><svg class="ico g"><use href="#folder"/></svg><span class="lb">草图</span></div></div>
      <div class="node l2"><div class="pill"><svg class="ico"><use href="#eyeoff"/></svg><svg class="ico g"><use href="#skedit"/></svg><span class="lb">草图1</span></div></div>
    </div>

    <div class="panel notes"><span>注释</span><i class="round plusr"></i></div>

    <div class="navbar">
      <svg class="nv" viewBox="0 0 30 32"><path d="M15 1L22 9H19V31H11V9H8Z" fill="#fff" stroke="#555" stroke-width="1.4"/><ellipse cx="15" cy="18" rx="14" ry="7" fill="none" stroke="#444" stroke-width="1.4"/><path d="M10 20L5 16V24Z" fill="#222"/></svg><i class="caret ml10"></i>
      <svg class="nv nw28 ml14" viewBox="0 0 28 30"><path d="M1 12L8 4V12ZM8 10L21 5V10Z" fill="#8a8f9a"/><rect x="1" y="11" width="26" height="18" fill="#f4f5f8" stroke="#444" stroke-width="1.2"/><rect x="5" y="15" width="18" height="10" fill="url(#cloth)" stroke="#444"/></svg>
      <svg class="nv ml23" viewBox="0 0 30 32"><path d="M10 30Q6 26 1 17Q1 14 4 15L9 20V4Q11 2 12 4V14V2Q14 0 15.5 2V14V3Q18 1 19 4V15L22 6Q25 5 25 8L22 24Q20 30 16 30Z" fill="#f4f5f8" stroke="#444" stroke-width="1.3"/></svg>
      <svg class="nv nw32 ml21" viewBox="0 0 32 32"><circle cx="12" cy="12" r="11" fill="url(#glass)" stroke="#444" stroke-width="1.4"/><path d="M20 20L29 29" stroke="#333" stroke-width="4.5" stroke-linecap="round"/><path d="M26 5H31M28.5 2V7M25 11H32" stroke="#333" stroke-width="1.5"/></svg>
      <svg class="nv ml21" viewBox="0 0 30 32"><rect x="1" y="2" width="28" height="28" fill="none" stroke="#666" stroke-dasharray="4 3"/><circle cx="12" cy="13" r="10" fill="url(#glass)" stroke="#444" stroke-width="1.4"/><path d="M19 21L29 30" stroke="#333" stroke-width="4" stroke-linecap="round"/></svg><i class="caret ml11"></i>
      <svg class="nv ml13" viewBox="0 0 30 32"><rect x="1" y="1" width="28" height="23" rx="1" fill="#f4f5f8" stroke="#444" stroke-width="1.4"/><rect x="4" y="4" width="22" height="17" fill="url(#screen)"/><path d="M12 24H18L20 29H10Z" fill="#d0d3d8" stroke="#777"/></svg><i class="caret ml5"></i>
      <svg class="nv ml15" viewBox="0 0 30 30"><rect x="1" y="1" width="28" height="28" fill="url(#cloth)" stroke="#444" stroke-width="1.2"/><path d="M6 1V29M11 1V29M16 1V29M21 1V29M26 1V29M1 6H29M1 11H29M1 16H29M1 21H29M1 26H29" stroke="#666" stroke-width=".8"/></svg><i class="caret ml6"></i>
      <svg class="nv ml15" viewBox="0 0 30 30"><rect x="1" y="2" width="28" height="26" fill="#f0f2f6" stroke="#2b4a7f" stroke-width="1.6"/><rect x="3" y="4" width="11" height="10" fill="#8cb0dd" stroke="#2b4a7f" stroke-width=".6"/><rect x="16" y="4" width="11" height="10" fill="#8cb0dd" stroke="#2b4a7f" stroke-width=".6"/><rect x="3" y="16" width="11" height="10" fill="#8cb0dd" stroke="#2b4a7f" stroke-width=".6"/><rect x="16" y="16" width="11" height="10" fill="#8cb0dd" stroke="#2b4a7f" stroke-width=".6"/></svg><i class="caret ml6"></i>
    </div>

    <div class="status">1 面 | 区域 : 62.283 mm^2</div>

    <aside class="hole">
      <div class="hole-head"><i class="round minus dark"></i><span>孔</span><svg class="hole-ff" width="20" height="14" viewBox="0 0 20 14"><path d="M0 0L10 7L0 14ZM10 0L20 7L10 14Z" fill="#333"/></svg></div>
      <div class="hole-body">
        <div class="scroll"><i></i></div>
        <div class="row"><label>放置</label><span class="tog sel"><svg width="28" height="32" viewBox="0 0 28 32"><rect width="28" height="32" fill="#d8d8d8"/><circle cx="7" cy="7" r="5" fill="#5fa6dd" stroke="#3f7fb5"/></svg></span><svg class="tog2" width="30" height="34" viewBox="0 0 30 34"><rect x="1" y="1" width="28" height="32" fill="#eee" stroke="#666" stroke-width="2"/><g fill="#5fa6dd" stroke="#3f7fb5"><ellipse cx="9" cy="10" rx="4.5" ry="5"/><ellipse cx="21" cy="10" rx="4.5" ry="5"/><ellipse cx="9" cy="24" rx="4.5" ry="5"/><ellipse cx="21" cy="24" rx="4.5" ry="5"/></g></svg></div>
        <div class="row"><label>面</label><span class="selbtn"><svg width="22" height="34" viewBox="0 0 22 34"><path d="M2 1V27L8 22L12 33L17 31L13 20L21 19Z" fill="#fff" stroke="#555" stroke-width="1.8"/></svg>1 已选定</span><svg class="clr" width="18" height="20" viewBox="0 0 18 20"><path d="M2 2L16 18M16 2L2 18" stroke="#555" stroke-width="4"/></svg></div>
        <div class="row"><label>参考</label><span class="pick">选择</span></div>
        <div class="row"><label>参考</label><span class="pick">选择</span></div>
        <div class="sect"><i class="tri"></i><b>形状设置</b></div>
        <div class="row wide gap26"><label>范围</label><span class="combo"><svg width="32" height="32" viewBox="0 0 32 32"><path d="M1 0V32M31 0V32" stroke="#1c3563" stroke-width="2.4"/><path d="M3 16H29" stroke="#333" stroke-width="1"/><path d="M3 16L8 12V20ZM29 16L24 12V20Z" fill="#333"/></svg>距离</span><svg class="flip" width="22" height="32" viewBox="0 0 22 32"><path d="M1 18L17 3M11 2H18V9" fill="none" stroke="#777" stroke-width="1.8"/><path d="M21 13L5 28M4 21V30H12" fill="none" stroke="#1e90e0" stroke-width="2"/></svg></div>
        <div class="row wide"><label>孔类型</label>
          <span class="hbtn sel"><svg viewBox="0 0 32 36"><use href="#hatchU"/><path d="M6 0H26V24L16 30L6 24Z" fill="#3f3f3f"/></svg></span>
          <span class="hbtn"><svg viewBox="0 0 32 36"><use href="#hatchU"/><path d="M0 0H32V14H24V36H8V14H0Z" fill="#3f3f3f"/></svg></span>
          <span class="hbtn"><svg viewBox="0 0 32 36"><use href="#hatchU"/><path d="M0 0H32L24 14V36H8V14Z" fill="#3f3f3f"/></svg></span>
        </div>
        <div class="row wide"><label>孔攻螺纹类型</label>
          <span class="hbtn sel"><svg viewBox="0 0 32 36"><use href="#hatchU"/><rect x="6" width="20" height="36" fill="#3f3f3f"/></svg></span>
          <span class="hbtn"><svg viewBox="0 0 32 36"><use href="#hatchU"/><rect x="6" width="20" height="36" fill="#3f3f3f"/><rect x="8" y="-2" width="16" height="32" rx="2" fill="#c4c4c4"/></svg></span>
          <span class="hbtn"><svg viewBox="0 0 32 36"><use href="#hatchU"/><path d="M6 1H26V36H6Z" fill="#e8e8e8"/><path d="M6 4L26 1M6 9L26 6M6 14L26 11M6 19L26 16M6 24L26 21M6 29L26 26M6 34L26 31" stroke="#444" stroke-width="2"/></svg></span>
          <span class="hbtn"><svg viewBox="0 0 32 36"><use href="#hatchU"/><path d="M2 0H30L26 20H6Z" fill="#e8e8e8"/><path d="M3 4L29 1M4 9L28 6M5 14L27 11M6 19L26 16" stroke="#444" stroke-width="2"/><rect x="8" y="20" width="16" height="16" fill="#3f3f3f"/></svg></span>
        </div>
        <div class="row wide"><label>孔底</label>
          <span class="hbtn"><svg viewBox="0 0 32 36"><use href="#hatchU"/><rect x="6" width="20" height="28" fill="#3f3f3f"/></svg></span>
          <span class="hbtn sel m-l"><svg viewBox="0 0 32 36"><use href="#hatchU"/><path d="M6 0H26V24L16 30L6 24Z" fill="#3f3f3f"/></svg></span>
        </div>
        <div class="diagram">
          <svg class="dia-svg" viewBox="0 0 720 316" width="720" height="316">
            <path d="M382 59H80V148" fill="none" stroke="#a0a0a0" stroke-width="4"/>
            <path d="M52 158H107" stroke="#f01c2c" stroke-width="3"/>
            <path d="M77 176V316" stroke="#5b90c8" stroke-width="3"/>
            <path d="M77 163L70 178H84Z" fill="#5b90c8"/><path d="M77 316L70 302H84Z" fill="#5b90c8"/>
            <path d="M120 316V164Q120 160 124 160H202Q206 160 206 164V316" fill="#c8c8c8" stroke="#9a9a9a" stroke-width="6"/>
            <path d="M186 316L196 308H382" fill="none" stroke="#8c8c8c" stroke-width="3"/>
            <path d="M196 312H382" stroke="#fff" stroke-width="2"/>
          </svg>
          <span class="val v1">9.00 mm</span>
          <span class="val v2">118.0 deg</span>
        </div>
      </div>
      <div class="hole-foot">
        <svg width="24" height="24" viewBox="0 0 24 24"><circle cx="12" cy="12" r="12" fill="#000"/><rect x="10" y="4" width="4" height="4" fill="#fff"/><path d="M8 10H14V18H16V20H8V18H10V12H8Z" fill="#fff"/></svg>
        <button class="fb first">确定</button><button class="fb">取消</button>
      </div>
    </aside>
  </section>

  <footer class="timeline">
    <svg class="tc w22" viewBox="0 0 22 36"><path d="M0 0H4V36H0ZM22 0V36L5 18Z" fill="#666"/></svg>
    <svg class="tc w26 g26" viewBox="0 0 26 36"><path d="M20 0V36L0 18ZM21 11H26V25H21Z" fill="#666"/></svg>
    <svg class="tc w24 g26" viewBox="0 0 24 40"><path d="M0 0L24 20L0 40Z" fill="#666"/></svg>
    <svg class="tc w26 g24" viewBox="0 0 26 36"><path d="M0 11H5V25H0ZM6 0L26 18L6 36Z" fill="#666"/></svg>
    <svg class="tc w22 g26" viewBox="0 0 22 36"><path d="M0 0L17 18L0 36ZM18 0H22V36H18Z" fill="#666"/></svg>
    <svg class="tl-track" viewBox="0 0 200 94" width="200" height="94">
      <use href="#skedit" x="0" y="30" width="32" height="32"/>
      <use href="#extrude" x="48" y="30" width="32" height="32"/>
      <use href="#fillet" x="96" y="30" width="32" height="32"/>
      <use href="#fillet" x="144" y="30" width="32" height="32"/>
      <path d="M50 20L56 12M58 20L64 12M66 20L72 12M74 20L80 12" stroke="#555" stroke-width="4"/>
      <path d="M17 68V76H161V68M65 68V76M113 68V76" fill="none" stroke="#cfcfcf" stroke-width="4"/>
      <path d="M172 18H196V28L186 44L182 44L172 28Z" fill="#666"/><rect x="182" y="36" width="4" height="46" fill="#666"/>
    </svg>
    <svg class="tl-gear" width="30" height="30" viewBox="0 0 32 32"><path fill="#777" d="M13 0h6l1 4 4 2 4-2 4 5-3 3v8l3 3-4 5-4-2-4 2-1 4h-6l-1-4-4-2-4 2-4-5 3-3v-8L0 9l4-5 4 2 4-2z"/><circle cx="16" cy="16" r="5" fill="#f0f0f0"/></svg>
  </footer>
</main>
</body>
</html>
```

FILE: styles.css
```css
* { box-sizing: border-box; }
html, body { margin: 0; padding: 0; }
body {
  width: 2552px; height: 1784px; position: relative; overflow: hidden;
  background: #121212;
  font-family: "Noto Sans", "Noto Sans CJK SC", sans-serif;
  color: #3a3a3a;
}
i { display: block; font-style: normal; }
svg { display: block; flex: none; }
.defs { position: absolute; }

/* desktop behind */
.desk { position: absolute; inset: 0; overflow: hidden; }
.d-top { position: absolute; left: 0; top: 0; width: 2552px; height: 28px; background: #000; }
.d-stars { position: absolute; inset: 0; width: 100%; height: 100%; }
.d-photoshop {
  position: absolute; left: 0; top: 10px; width: 2140px; height: 18px; overflow: hidden;
  background: linear-gradient(#4c4c4c, #606060); border-radius: 0 14px 0 0; text-align: center;
}
.d-photoshop span { display: block; margin: 9px 0 0 -120px; font-size: 26px; line-height: 30px; color: #d8d8d8; font-weight: 500; }
.d-win { position: absolute; left: 0; top: 28px; width: 2552px; height: 175px; background: linear-gradient(90deg, #eeeeea, #e6e5df 60%, #ecebe6); border-bottom: 2px solid #a9a9a5; }
.d-vline { position: absolute; left: 163px; top: 0; width: 1px; height: 38px; background: #d4d3cf; }
.d-light { position: absolute; left: -18px; top: 40px; width: 36px; height: 24px; border-radius: 50%; background: #d8d7d3; }
.d-tabshape { position: absolute; left: 1386px; top: 24px; width: 79px; height: 12px; background: #dcdbd6; border-radius: 10px 10px 0 0; }
.d-clip { position: absolute; left: -4px; top: 155px; font-size: 22px; line-height: 30px; color: #a9a8a4; }
.d-left { position: absolute; left: 0; top: 203px; width: 110px; bottom: 0; background: #161616; }
.d-more { position: absolute; left: 84px; top: 92px; font-size: 14px; line-height: 16px; letter-spacing: 3px; color: #9c9c9c; white-space: nowrap; }
.d-list { position: absolute; left: 0; top: 271px; width: 110px; }
.d-it { height: 44px; line-height: 44px; font-size: 27px; color: #d8d8d8; text-align: right; padding-right: 96px; overflow: hidden; }
.d-it.sel { background: #2e2e32; }
.d-files { position: absolute; left: 0; top: 1416px; width: 110px; }
.d-f { height: 43.5px; display: flex; justify-content: flex-end; overflow: hidden; line-height: 44px; font-size: 27px; color: #c8c8c8; white-space: nowrap; width: 75px; }
.d-f.first { width: 110px; justify-content: flex-start; font-size: 25px; }
.d-f span { flex: none; }
.d-bline { position: absolute; left: 145px; top: 1746px; bottom: 0; width: 2px; background: #2a2a2a; }
.d-blue { position: absolute; left: 727px; top: 1756px; width: 125px; height: 3px; background: #264f86; }
.d-right { position: absolute; left: 2510px; top: 203px; width: 42px; height: 1491px; background: linear-gradient(90deg, #d2d2d2, #eeeeee 50%, #e2e2e2); overflow: hidden; }
.dr-dark { position: absolute; left: 0; top: 0; width: 42px; height: 155px; background: #1d1d1d; }
.dr-red { position: absolute; left: -14px; top: 168px; width: 52px; height: 84px; border: 5px solid #d8391f; border-radius: 12px; }
.dr-tip { position: absolute; left: 0; top: 170px; width: 42px; height: 62px; background: #2f2f2f; overflow: hidden; }
.dr-tip span { display: block; margin-left: -10px; font-size: 26px; line-height: 60px; color: #eee; white-space: nowrap; }
.dr-mark { position: absolute; left: 6px; top: 285px; width: 12px; height: 3px; background: #222; transform: rotate(-35deg); }
.dr-bar { position: absolute; left: 24px; top: 262px; width: 5px; height: 58px; background: #c8c8c8; }
.dr-dark2 { position: absolute; left: 0; top: 1052px; width: 42px; height: 90px; background: #1d1d1d; }
.dr-v { position: absolute; left: 1px; top: 1150px; font-size: 18px; line-height: 24px; color: #555; }
.dr-l1 { position: absolute; left: 0; top: 1231px; width: 42px; height: 2px; background: #b9c8de; }
.dr-l2 { position: absolute; left: 0; top: 1320px; width: 42px; height: 2px; background: #c8dbe8; }
.dr-chev { position: absolute; left: 9px; top: 1191px; width: 8px; height: 8px; border-right: 2px solid #444; border-bottom: 2px solid #444; transform: rotate(45deg); }

/* window */
.win {
  position: absolute; left: 110px; top: 65px; width: 2400px; height: 1681px;
  display: flex; flex-direction: column; overflow: hidden;
  border-radius: 22px; background: #f2f2f2;
  box-shadow: 0 0 6px rgba(0,0,0,.35);
}
.titlebar { height: 57px; flex: none; position: relative; display: flex; align-items: center; justify-content: center; background: #f6f5f1; border-bottom: 2px solid #b5b5b3; }
.titlebar h1 { margin: 0; font-size: 26.5px; font-weight: 600; color: #3c3c3c; line-height: 36px; }
.lights { position: absolute; left: 17px; top: 16px; display: flex; gap: 16px; }
.lights i { width: 24px; height: 24px; border-radius: 50%; background: #dfdfdb; border: 1px solid #cfcfcb; }

.tabbar { height: 64px; flex: none; background: #c9c9c9; display: flex; align-items: center; padding-right: 4px; background-clip: content-box; }
.qa { height: 32px; width: 28px; }
.qa.first { margin-left: 18px; }
.m39 { margin-left: 39px; }
.m37 { margin-left: 37px; }
.m38 { margin-left: 38px; }
.m23 { margin-left: 23px; }
.m10 { margin-left: 10px; }
.m12 { margin-left: 12px; }
.caret { width: 0; height: 0; flex: none; border-left: 7.5px solid transparent; border-right: 7.5px solid transparent; border-top: 13px solid #555; }
.caret.dimc { border-top-color: #8b8b8b; }
.caret.sm { display: inline-block; margin-left: 8px; border-left-width: 6.5px; border-right-width: 6.5px; border-top: 10px solid #333; vertical-align: 3px; }
.home { margin-left: 15px; width: 78px; align-self: flex-end; height: 56px; background: #b5b5b5; border-radius: 8px 8px 0 0; display: flex; align-items: center; justify-content: center; padding-top: 6px; }
.doc { margin-left: 8px; width: 1442px; align-self: flex-end; height: 56px; background: #f2f2f2; border-radius: 8px 8px 0 0; display: flex; align-items: center; padding-left: 630px; position: relative; }
.doc span { margin-left: 10px; font-size: 24.5px; color: #3c3c3c; line-height: 32px; padding-top: 2px; }
.doc-x { position: absolute; left: 1411px; top: 18px; }
.plus { margin-left: 8px; width: 56px; align-self: flex-end; height: 56px; background: #b5b5b5; border-radius: 8px 8px 0 0; display: flex; align-items: center; justify-content: center; }
.tr { display: flex; align-items: center; height: 64px; }
.t-data { margin-left: 24px; }
.t-clock { margin-left: 34px; }
.t-one { margin-left: 10px; font-size: 24px; color: #555; line-height: 30px; width: 18px; }
.t-bell { margin-left: 47px; }
.t-help { margin-left: 36px; }
.avatar { margin-left: 44px; width: 54px; height: 54px; border-radius: 50%; background: #f2f2f2; display: flex; align-items: center; justify-content: center; font-size: 24px; color: #3a3a3a; white-space: nowrap; }

.toolbar { height: 170px; flex: none; background: #f2f2f2; display: flex; padding-left: 24px; position: relative; }
.design { margin-top: 21px; width: 218px; height: 121px; border: 2px solid #cfcfcf; border-radius: 8px; background: #f2f2f2; font: inherit; font-size: 21px; color: #333; padding-bottom: 4px; }
.ribbon { margin-left: 12px; display: flex; flex-direction: column; }
.rtabs { display: flex; height: 48px; }
.rtab { width: 136px; height: 47px; text-align: center; font-size: 21px; line-height: 44px; color: #3f3f3f; }
.rtab.wide { width: 180px; }
.rtab.on { color: #0696d7; position: relative; }
.rtab.on::after { content: ""; position: absolute; left: 23px; right: 21px; bottom: 0; height: 6px; background: #0696d7; }
.groups { display: flex; margin-left: 9px; }
.grp { height: 107px; display: flex; flex-direction: column; padding: 0 11px; position: relative; }
.grp:first-child { padding-left: 0; }
.grp::after { content: ""; position: absolute; right: 0; top: 5px; width: 2px; height: 102px; background: #c8c8c8; }
.grp.p15 { padding: 0 17px 0 15px; }
.grp.pins { padding: 0 9px 0 13px; }
.grp.last::after { display: none; }
.cells { display: flex; height: 76px; }
.cell { width: 86px; height: 76px; display: flex; align-items: center; justify-content: center; }
.cell svg { width: 64px; height: 64px; }
.cell.active { position: relative; }
.cell.active::before { content: ""; position: absolute; left: 5px; top: 0; width: 76px; height: 76px; background: #0696d7; }
.cell.active svg { position: relative; }
.glabel { margin-top: 3px; height: 30px; line-height: 30px; text-align: center; font-size: 21px; color: #3f3f3f; white-space: nowrap; padding-right: 8px; }
.p15 .glabel { padding-right: 0; }
.pins .glabel { padding-right: 8px; }
.last .glabel { padding-right: 0; margin-left: 6px; }

.viewport { flex: 1; position: relative; background: #fff; overflow: hidden; min-height: 0; }
.scene { position: absolute; left: 0; top: 0; }
.dim-t { font-family: "Liberation Sans", sans-serif; font-size: 30px; fill: #2d5a9e; }
.cube-t { font-size: 50px; fill: #a9a9a9; font-family: "Noto Sans CJK SC", serif; font-weight: 300; }
.cube-t.sm { font-size: 36px; }
.ax { font-size: 26px; font-weight: 500; font-family: "Liberation Sans", sans-serif; }
.ax.z { fill: #8a8af2; }
.ax.x { fill: #f58e8e; }

.redbox { position: absolute; left: 664px; top: 533px; width: 553px; height: 534px; border: 5px solid #e8442a; border-radius: 9px; }

.dimbox { position: absolute; left: 1262px; top: 802px; width: 230px; height: 44px; background: #f0f0f0; display: flex; align-items: center; padding-left: 10px; }
.grip { width: 8px; height: 36px; border-left: 2px dotted #ccc; border-right: 2px solid #d4d4d4; }
.dim-in { margin-left: 10px; width: 154px; height: 38px; background: #fff; border: 2px solid #c8c8c8; display: flex; align-items: center; justify-content: center; font-size: 24px; color: #333; }
.textcaret { width: 2px; height: 28px; background: #111; }
.dots { margin-left: 22px; width: 6px; height: 6px; border-radius: 50%; background: #888; box-shadow: 0 -11px 0 #888, 0 11px 0 #888; }

.panel { position: absolute; left: 8px; width: 599px; height: 48px; background: #f0f0f0; border: 2px solid #d0d0d0; display: flex; align-items: center; font-size: 22px; color: #666; }
.browser { top: 8px; padding-left: 8px; }
.browser span { margin-left: 20px; flex: 1; }
.notes { top: 1232px; padding-left: 48px; }
.notes span { flex: 1; }
.round { width: 18px; height: 18px; border-radius: 50%; background: #222; position: relative; margin-right: 20px; flex: none; }
.round::before { content: ""; position: absolute; left: 4px; top: 8px; width: 10px; height: 2px; background: #fff; }
.plusr::after { content: ""; position: absolute; left: 8px; top: 4px; width: 2px; height: 10px; background: #fff; }

.tree { position: absolute; left: 45px; top: 67px; }
.node { display: flex; align-items: center; height: 40px; margin-bottom: 8px; }
.twisty { width: 14px; height: 12px; }
.node.l1 { margin-left: 36px; }
.node.l2 { margin-left: 107px; }
.node .pill { margin-left: 21px; }
.node.l2 .pill { margin-left: 0; }
.pill { height: 40px; background: #f1f1f1; display: flex; align-items: center; padding: 0 20px 0 6px; font-size: 22px; color: #3a3a3a; position: relative; }
.ico { width: 32px; height: 26px; color: #8e8e8e; }
.ico.eye { height: 22px; }
.ico.off { color: #d2d2d2; }
.ico.g { margin-left: 18px; }
.lb { margin-left: 28px; white-space: nowrap; line-height: 40px; }
.lb.gear { margin-left: 21px; }
.pill.root { padding-right: 15px; }
.rootname { margin-left: 12px; width: 196px; height: 32px; background: #999; display: flex; align-items: center; padding-left: 9px; color: #fff; }
.rootname b { margin-left: 32px; font-size: 22px; font-weight: 700; letter-spacing: .5px; white-space: nowrap; }
.radio { margin-left: 9px; }
.warn::after { content: ""; position: absolute; left: 50px; right: 4px; bottom: 0; height: 7px; background: repeating-linear-gradient(-45deg, #6f87a8 0 3.5px, transparent 3.5px 8.5px); }

.navbar { position: absolute; left: 964px; top: 1230px; width: 474px; height: 48px; background: #f0f0f0; display: flex; align-items: center; padding-left: 8px; }
.nv { width: 30px; height: 32px; }
.nw28 { width: 28px; }
.nw32 { width: 32px; }
.navbar .caret { border-left-width: 6px; border-right-width: 6px; border-top: 9px solid #333; }
.ml5 { margin-left: 5px; } .ml6 { margin-left: 6px; } .ml10 { margin-left: 10px; } .ml11 { margin-left: 11px; }
.ml13 { margin-left: 13px; } .ml14 { margin-left: 14px; } .ml15 { margin-left: 15px; } .ml21 { margin-left: 21px; } .ml23 { margin-left: 23px; }

.status { position: absolute; left: 2076px; top: 1247px; font-size: 23.5px; line-height: 32px; font-weight: 500; color: #333; white-space: nowrap; }

.hole { position: absolute; left: 1652px; top: 226px; width: 738px; height: 1003px; background: #f2f2f2; border: 2px solid #d2d2d2; display: flex; flex-direction: column; }
.hole-head { height: 46px; flex: none; display: flex; align-items: center; padding-left: 22px; border-bottom: 3px solid #cfcfcf; font-size: 22px; color: #666; }
.hole-head .round { margin-right: 8px; }
.hole-ff { margin-left: auto; margin-right: 6px; }
.hole-body { flex: 1; min-height: 0; position: relative; overflow: hidden; padding: 4px 0 0 24px; }
.scroll { position: absolute; right: 2px; top: 0; bottom: 0; width: 14px; background: #bdbdbd; padding: 2px 1px 0; }
.scroll i { height: 738px; background: #999; border: 1px solid #888; border-radius: 6px; }
.row { display: flex; align-items: center; height: 54px; margin-bottom: 6px; font-size: 22px; color: #3a3a3a; }
.row label { width: 159px; flex: none; }
.tog { width: 46px; height: 54px; display: flex; align-items: center; justify-content: center; }
.tog.sel, .hbtn.sel { background: #0696d7; }
.tog2 { margin-left: 19px; }
.selbtn { width: 140px; height: 54px; background: #0696d7; color: #fff; display: flex; align-items: center; padding-left: 14px; gap: 6px; white-space: nowrap; }
.clr { margin-left: 22px; }
.pick { width: 68px; height: 54px; background: #fff; border: 3px solid #cfcfcf; display: flex; align-items: center; justify-content: center; }
.sect { height: 52px; margin-bottom: 16px; display: flex; align-items: center; font-size: 22px; color: #3a3a3a; margin-left: -5px; }
.tri { width: 0; height: 0; border-left: 9px solid transparent; border-right: 9px solid transparent; border-top: 13px solid #333; }
.sect b { margin-left: 11px; font-weight: 700; }
.row.wide { padding-left: 4px; gap: 19px; }
.row.gap26 { margin-bottom: 26px; gap: 0; }
.row.wide label { width: 335px; margin-right: -19px; }
.row.gap26 label { margin-right: 0; }
.combo { width: 211px; height: 54px; background: #fff; border: 3px solid #cfcfcf; display: flex; align-items: center; padding-left: 4px; gap: 6px; }
.flip { margin-left: 32px; }
.hbtn { width: 46px; height: 54px; display: flex; align-items: center; justify-content: center; }
.hbtn svg { width: 32px; height: 36px; }
.hbtn + .hbtn { margin-left: -7px; }
.hbtn.m-l { margin-left: -8px; }
.diagram { position: absolute; left: 0; top: 567px; width: 720px; height: 316px; }
.dia-svg { position: absolute; left: 0; top: 0; }
.val { position: absolute; left: 382px; width: 239px; height: 47px; background: #fff; border: 3px solid #cfcfcf; font-size: 22px; line-height: 40px; padding-left: 4px; color: #333; }
.v1 { top: 37px; }
.v2 { top: 286px; }
.hole-foot { height: 72px; flex: none; border-top: 3px solid #d2d2d2; display: flex; align-items: center; padding-left: 29px; background: #f2f2f2; position: relative; z-index: 1; }
.fb { width: 119px; height: 40px; background: #e6e6e6; border: 2px solid #bdbdbd; font: inherit; font-size: 22px; color: #666; margin-left: 37px; }
.fb.first { margin-left: auto; }
.hole-foot .fb:last-child { margin-right: 21px; }

.timeline { height: 100px; flex: none; background: #f0f0f0; border-top: 6px solid #ccc; display: flex; align-items: center; padding-left: 22px; }
.tc { height: 36px; }
.w22 { width: 22px; } .w24 { width: 24px; } .w26 { width: 26px; }
.g26 { margin-left: 26px; } .g24 { margin-left: 24px; }
.tl-track { margin-left: 48px; }
.tl-gear { margin-left: auto; margin-right: 27px; }
```
